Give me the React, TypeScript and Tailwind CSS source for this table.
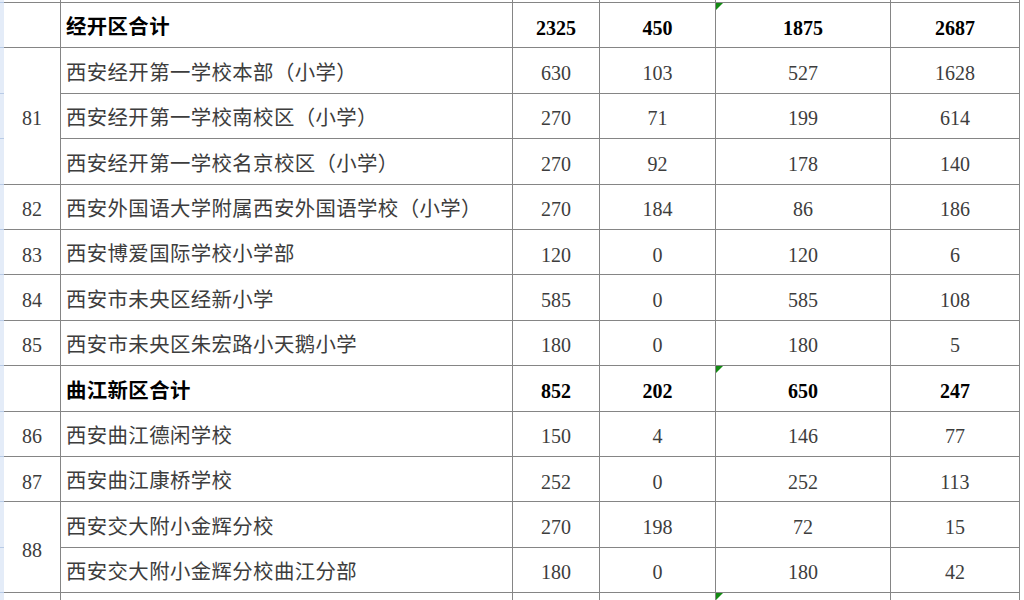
type Row = {
  no?: string;
  span?: number;
  name: string;
  a: string;
  b: string;
  c: string;
  d: string;
  total?: boolean;
};

const rows: Row[] = [
  { name: "经开区合计", a: "2325", b: "450", c: "1875", d: "2687", total: true },
  { no: "81", span: 3, name: "西安经开第一学校本部（小学）", a: "630", b: "103", c: "527", d: "1628" },
  { name: "西安经开第一学校南校区（小学）", a: "270", b: "71", c: "199", d: "614" },
  { name: "西安经开第一学校名京校区（小学）", a: "270", b: "92", c: "178", d: "140" },
  { no: "82", span: 1, name: "西安外国语大学附属西安外国语学校（小学）", a: "270", b: "184", c: "86", d: "186" },
  { no: "83", span: 1, name: "西安博爱国际学校小学部", a: "120", b: "0", c: "120", d: "6" },
  { no: "84", span: 1, name: "西安市未央区经新小学", a: "585", b: "0", c: "585", d: "108" },
  { no: "85", span: 1, name: "西安市未央区朱宏路小天鹅小学", a: "180", b: "0", c: "180", d: "5" },
  { name: "曲江新区合计", a: "852", b: "202", c: "650", d: "247", total: true },
  { no: "86", span: 1, name: "西安曲江德闲学校", a: "150", b: "4", c: "146", d: "77" },
  { no: "87", span: 1, name: "西安曲江康桥学校", a: "252", b: "0", c: "252", d: "113" },
  { no: "88", span: 2, name: "西安交大附小金辉分校", a: "270", b: "198", c: "72", d: "15" },
  { name: "西安交大附小金辉分校曲江分部", a: "180", b: "0", c: "180", d: "42" },
];

const cell = "border-r border-b border-[#858585] p-0";
const strip = "border-b border-[#b9cbe6] bg-[#e4ecf8] p-0";

function Flag() {
  return (
    <span className="absolute left-0 top-0 h-0 w-0 border-t-[7px] border-r-[7px] border-t-[#138a13] border-r-transparent" />
  );
}

export default function App() {
  return (
    <div
      className="h-[600px] w-[1024px] overflow-hidden bg-white"
      style={{ fontFamily: '"Liberation Serif", "Noto Sans CJK SC", serif' }}
    >
      <table className="w-[1020px] table-fixed border-separate border-spacing-0 text-[20px] text-[#3d3d3d]">
        <colgroup>
          <col className="w-[4px]" />
          <col className="w-[57px]" />
          <col className="w-[452px]" />
          <col className="w-[87px]" />
          <col className="w-[116px]" />
          <col className="w-[175px]" />
          <col className="w-[129px]" />
        </colgroup>
        <tbody>
          <tr className="h-[3px] leading-[0]">
            <td className={strip} />
            <td className={cell} />
            <td className={cell} />
            <td className={cell} />
            <td className={cell} />
            <td className={cell} />
            <td className={cell} />
          </tr>
          {rows.map((r, i) => {
            const strong = r.total ? "font-bold text-black" : "";
            return (
              <tr key={i} className="h-[45.4px] leading-none">
                <td className={strip} />
                {r.total ? (
                  <td className={cell} />
                ) : (
                  r.span && (
                    <td rowSpan={r.span} className={`${cell} pt-[5px] text-center`}>
                      {r.no}
                    </td>
                  )
                )}
                <td
                  className={`${cell} pl-[5px] pt-[5px] text-[20.4px] tracking-[0.4px] whitespace-nowrap ${strong}`}
                >
                  {r.name}
                </td>
                <td className={`${cell} pt-[5px] text-center ${strong}`}>{r.a}</td>
                <td className={`${cell} pt-[5px] text-center ${strong}`}>{r.b}</td>
                <td className={`${cell} relative pt-[5px] text-center ${strong}`}>
                  {r.total && <Flag />}
                  {r.c}
                </td>
                <td className={`${cell} pt-[5px] text-center ${strong}`}>{r.d}</td>
              </tr>
            );
          })}
          <tr className="h-[45px]">
            <td className={strip} />
            <td className={cell} />
            <td className={cell} />
            <td className={cell} />
            <td className={cell} />
            <td className={`${cell} relative`}>
              <Flag />
            </td>
            <td className={cell} />
          </tr>
        </tbody>
      </table>
    </div>
  );
}
